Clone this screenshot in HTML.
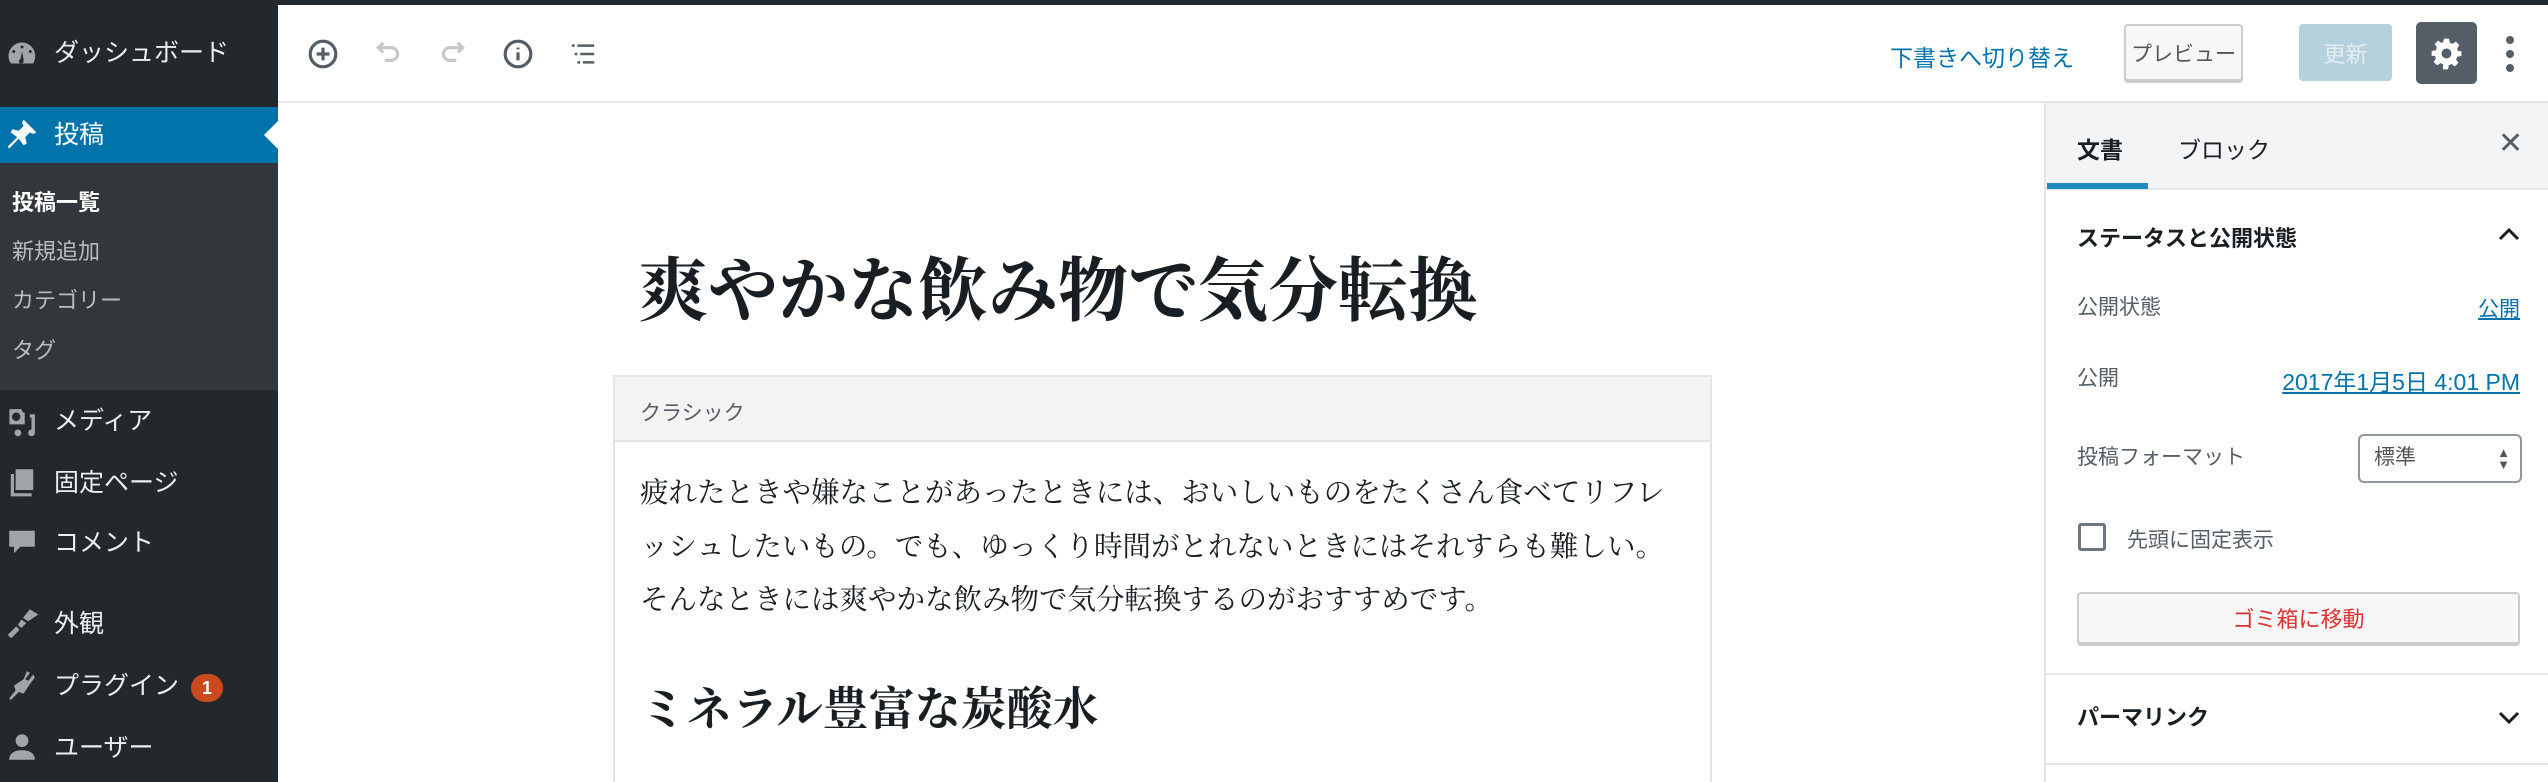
<!DOCTYPE html>
<html style="width:2548px;height:782px;overflow:hidden"><head><meta charset="utf-8"><style>
*{margin:0;padding:0;box-sizing:border-box}
body{width:2548px;height:782px;overflow:hidden;background:#fff;font-family:"Liberation Sans","Noto Sans CJK JP",sans-serif;position:relative}
.a{position:absolute;white-space:nowrap}
#side{left:0;top:0;width:278px;height:782px;background:#23282d}
.mi{position:absolute;left:54px;font-size:25px;color:#eee;line-height:30px}
.si{position:absolute;left:12px;font-size:22px;color:rgba(240,245,250,.7);line-height:30px}
.ic{position:absolute;left:6px;fill:#a0a5aa}
.serif{font-family:"Liberation Serif","Noto Serif CJK SC","Noto Serif CJK JP",serif}
.fx{display:flex;align-items:center;justify-content:center}
</style></head><body>
<div class="a" style="left:0;top:0;width:2548px;height:5px;background:#23282d"></div>
<div class="a" id="side"></div>
<svg class="ic" style="top:38px;left:6px" width="32" height="30" viewBox="0 0 20 20"><path d="M10 3a9 9 0 0 0-9 9c0 2 .6 3.6 1.7 5h14.6A9 9 0 0 0 10 3zm0 2a1 1 0 1 1 0 2 1 1 0 0 1 0-2zM4.5 8a1 1 0 1 1 0 2 1 1 0 0 1 0-2zm11 0a1 1 0 1 1 0 2 1 1 0 0 1 0-2zM11 15.5a1.5 1.5 0 1 1-2-1.4L10 9l1 5.1c.1.3 0 .9 0 1.4z"/></svg>
<div class="mi" style="top:38px">ダッシュボード</div>
<div class="a" style="left:0;top:107px;width:278px;height:56px;background:#0073aa"></div>
<div class="a" style="left:264px;top:121px;width:0;height:0;border-top:14px solid transparent;border-bottom:14px solid transparent;border-right:14px solid #fff"></div>
<svg class="ic" style="top:118px;left:6px;fill:#fff" width="32" height="32" viewBox="0 0 20 20"><path d="M11 1l8 8-2 1-2-1-3 3 1 4-2 1-3-4-6 6-1-1 6-6-4-3 1-2 4 1 3-3-1-2z"/></svg>
<div class="mi" style="top:120px;color:#fff">投稿</div>
<div class="a" style="left:0;top:163px;width:278px;height:227px;background:#32373c"></div>
<div class="si" style="top:188px;color:#fff;font-weight:bold">投稿一覧</div>
<div class="si" style="top:237px">新規追加</div>
<div class="si" style="top:286px">カテゴリー</div>
<div class="si" style="top:336px">タグ</div>
<svg class="ic" style="top:404px" width="34" height="34" viewBox="0 0 20 20"><path d="M2 3h7l1 2h1v7H2zM6 5a2.5 2.5 0 1 0 0 5 2.5 2.5 0 0 0 0-5zm8 1h3v11a2 2 0 1 1-2-2V8h-1zM7 15a2 2 0 1 1-2 2 2 2 0 0 1 2-2z"/></svg>
<div class="mi" style="top:406px">メディア</div>
<svg class="ic" style="top:466px" width="32" height="32" viewBox="0 0 20 20"><path d="M6 2h11v13H6zM3 5h2v12h11v2H3z"/></svg>
<div class="mi" style="top:468px">固定ページ</div>
<svg class="ic" style="top:526px" width="32" height="32" viewBox="0 0 20 20"><path d="M2 3h16v10H9l-4 4v-4H2z"/></svg>
<div class="mi" style="top:528px">コメント</div>
<svg class="ic" style="top:606px" width="34" height="34" viewBox="0 0 20 20"><path d="M14 2l5 3-6 4-3-2zM9 8l3 2-3 3-2-2zM6 12l2 2-5 5-2-2z"/></svg>
<div class="mi" style="top:609px">外観</div>
<svg class="ic" style="top:668px" width="32" height="32" viewBox="0 0 20 20"><path d="M13 2l2 1-3 4 2 1 3-4 1 2-3 4-4 6-3-1-5 5-1-1 4-5-1-3 6-4z"/></svg>
<div class="mi" style="top:671px">プラグイン</div>
<div class="a fx" style="left:191px;top:674px;width:32px;height:28px;border-radius:14px;background:#ca4a1f;color:#fff;font-size:18px;font-weight:bold">1</div>
<svg class="ic" style="top:730px" width="32" height="34" viewBox="0 0 20 20"><circle cx="10" cy="6" r="4"/><path d="M2 18c0-4 3-6 8-6s8 2 8 6z"/></svg>
<div class="mi" style="top:733px">ユーザー</div>

<div class="a" style="left:278px;top:101px;width:2270px;height:2px;background:#e2e4e7"></div>
<svg class="a" style="left:307px;top:38px" width="32" height="32" viewBox="0 0 20 20" fill="none" stroke="#555d66" stroke-width="2"><circle cx="10" cy="10" r="8"/><path d="M10 6v8M6 10h8"/></svg>
<svg class="a" style="left:372px;top:38px" width="32" height="32" viewBox="0 0 20 20" fill="none" stroke="#c5c8cc" stroke-width="2"><path d="M4 6h8a4 4 0 0 1 0 8H8M7 3L4 6l3 3"/></svg>
<svg class="a" style="left:437px;top:38px" width="32" height="32" viewBox="0 0 20 20" fill="none" stroke="#c5c8cc" stroke-width="2"><path d="M16 6H8a4 4 0 0 0 0 8h4M13 3l3 3-3 3"/></svg>
<svg class="a" style="left:502px;top:38px" width="32" height="32" viewBox="0 0 20 20" fill="none" stroke="#555d66" stroke-width="2"><circle cx="10" cy="10" r="8"/><path d="M10 9v5M10 6v1"/></svg>
<svg class="a" style="left:568px;top:40px" width="30" height="28" viewBox="0 0 20 20" stroke="#555d66" stroke-width="1.8"><path d="M2 4h2M6 4h12M4 10h2M8 10h10M6 16h2M10 16h8"/></svg>
<div class="a" style="left:1890px;top:39px;font-size:23px;color:#0073aa">下書きへ切り替え</div>
<div class="a fx" style="left:2124px;top:24px;width:119px;height:57px;border:2px solid #ccc;border-radius:4px;background:#f7f7f7;box-shadow:0 2px 0 #ccc;font-size:21px;color:#555">プレビュー</div>
<div class="a fx" style="left:2299px;top:24px;width:93px;height:57px;border-radius:4px;background:#b5d1dd;font-size:22px;color:#e4eef2">更新</div>
<div class="a" style="left:2416px;top:22px;width:61px;height:62px;border-radius:5px;background:#555d66"></div>
<svg class="a" style="left:2430px;top:37px" width="33" height="33" viewBox="0 0 20 20"><path fill="#fff" d="M8.5 1h3l.5 2.5 1.6.7 2.1-1.4 2.1 2.1-1.4 2.1.7 1.6L19 8.5v3l-2.5.5-.7 1.6 1.4 2.1-2.1 2.1-2.1-1.4-1.6.7-.5 2.5h-3L8 16.5l-1.6-.7-2.1 1.4-2.1-2.1 1.4-2.1-.7-1.6L1 11.5v-3L3.5 8l.7-1.6-1.4-2.1 2.1-2.1 2.1 1.4L8 3zM10 7a3 3 0 1 0 0 6 3 3 0 0 0 0-6z"/></svg>
<div class="a" style="left:2506px;top:36px;width:8px;height:8px;border-radius:4px;background:#555d66"></div>
<div class="a" style="left:2506px;top:50px;width:8px;height:8px;border-radius:4px;background:#555d66"></div>
<div class="a" style="left:2506px;top:64px;width:8px;height:8px;border-radius:4px;background:#555d66"></div>

<div class="a" style="left:2044px;top:103px;width:2px;height:679px;background:#e2e4e7"></div>
<div class="a" style="left:2046px;top:103px;width:502px;height:87px;background:#f3f4f5;border-bottom:2px solid #e2e4e7"></div>
<div class="a" style="left:2047px;top:183px;width:101px;height:6px;background:#1e8cbe"></div>
<div class="a" style="left:2077px;top:131px;font-size:23px;font-weight:bold;color:#191e23">文書</div>
<div class="a" style="left:2178px;top:131px;font-size:23px;color:#191e23">ブロック</div>
<div class="a" style="left:2498px;top:126px;font-size:30px;color:#555d66">✕</div>
<div class="a" style="left:2077px;top:221px;font-size:22px;font-weight:bold;color:#191e23">ステータスと公開状態</div>
<svg class="a" style="left:2497px;top:226px" width="24" height="16" viewBox="0 0 24 16" fill="none" stroke="#191e23" stroke-width="3"><path d="M3 13l9-9 9 9"/></svg>
<div class="a" style="left:2077px;top:291px;font-size:21px;color:#555d66">公開状態</div>
<div class="a" style="right:28px;top:293px;font-size:21px;color:#0073aa;text-decoration:underline">公開</div>
<div class="a" style="left:2077px;top:362px;font-size:21px;color:#555d66">公開</div>
<div class="a" style="right:28px;top:363px;font-size:23px;color:#0073aa;text-decoration:underline">2017年1月5日 4:01 PM</div>
<div class="a" style="left:2077px;top:441px;font-size:21px;color:#555d66">投稿フォーマット</div>
<div class="a" style="left:2358px;top:434px;width:164px;height:49px;border:2px solid #8f98a1;border-radius:6px;background:#fff;font-size:21px;color:#555;line-height:44px;padding-left:14px">標準<span style="position:absolute;right:10px;top:0;font-size:13px;line-height:12px;padding-top:11px;color:#555">▲<br>▼</span></div>
<div class="a" style="left:2078px;top:523px;width:28px;height:28px;border:3px solid #6c7781;border-radius:3px"></div>
<div class="a" style="left:2127px;top:524px;font-size:21px;color:#555d66">先頭に固定表示</div>
<div class="a fx" style="left:2077px;top:592px;width:443px;height:52px;border:2px solid #ccc;border-radius:4px;background:#f7f7f7;box-shadow:0 2px 0 #ccc;font-size:22px;color:#dc3232">ゴミ箱に移動</div>
<div class="a" style="left:2046px;top:673px;width:502px;height:2px;background:#e2e4e7"></div>
<div class="a" style="left:2077px;top:700px;font-size:22px;font-weight:bold;color:#191e23">パーマリンク</div>
<svg class="a" style="left:2497px;top:710px" width="24" height="16" viewBox="0 0 24 16" fill="none" stroke="#191e23" stroke-width="3"><path d="M3 3l9 9 9-9"/></svg>
<div class="a" style="left:2046px;top:763px;width:502px;height:2px;background:#e2e4e7"></div>

<div class="a serif" style="left:638px;top:248px;font-size:70px;font-weight:bold;color:#191e23;line-height:90px">爽やかな飲み物で気分転換</div>
<div class="a" style="left:613px;top:375px;width:1099px;height:407px;border:2px solid #e2e4e7;border-bottom:none;background:#fff"></div>
<div class="a" style="left:615px;top:377px;width:1095px;height:65px;background:#f3f3f4;border-bottom:2px solid #e2e4e7"></div>
<div class="a" style="left:640px;top:397px;font-size:21px;color:#555d66">クラシック</div>
<div class="a serif" style="left:640px;top:467px;font-size:28.5px;color:#191e23;line-height:53.5px">疲れたときや嫌なことがあったときには、おいしいものをたくさん食べてリフレ<br>ッシュしたいもの。でも、ゆっくり時間がとれないときにはそれすらも難しい。<br>そんなときには爽やかな飲み物で気分転換するのがおすすめです。</div>
<div class="a serif" style="left:640px;top:682px;font-size:46px;font-weight:bold;color:#191e23;line-height:56px">ミネラル豊富な炭酸水</div>
</body></html>
